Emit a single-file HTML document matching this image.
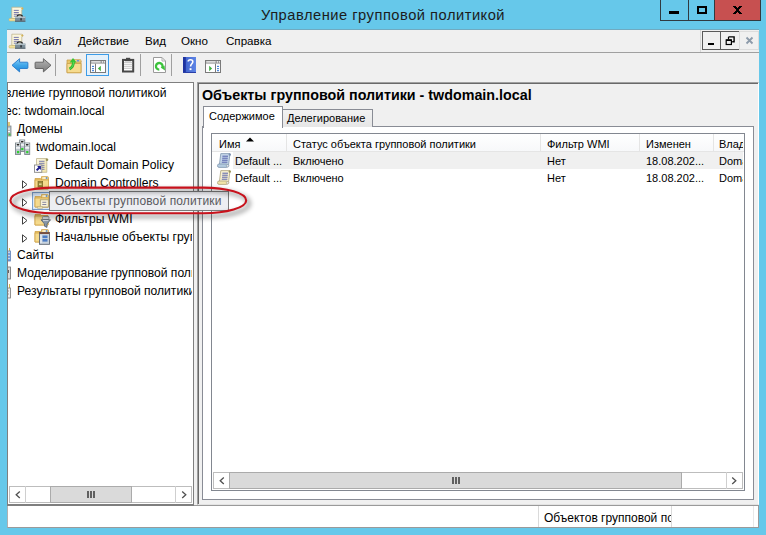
<!DOCTYPE html>
<html><head><meta charset="utf-8">
<style>
*{margin:0;padding:0;box-sizing:border-box}
html,body{width:766px;height:535px;overflow:hidden;background:#66C8EA;font-family:"Liberation Sans",sans-serif;font-size:12px;color:#000}
.a{position:absolute}
.t{position:absolute;white-space:nowrap;line-height:14px}
svg{position:absolute;overflow:visible}
.exp{position:absolute;width:0;height:0}
</style></head><body>
<!-- title bar -->
<svg style="left:9px;top:6px" width="17" height="16" viewBox="0 0 17 16">
 <path d="M2.8 1.2h9.7c0.8 0 1.6 0.6 1.6 1.3s-0.6 1.2-1.3 1.2v8.8H2.8z" fill="#FBF6DC" stroke="#B9AE86" stroke-width="0.7"/>
 <circle cx="13.2" cy="2.4" r="1" fill="#D4B254"/>
 <path d="M4.8 4.4h5M4.8 6.5h5M4.8 8.3h5M4.8 10.2h3" stroke="#6A6CA8" stroke-width="0.9"/>
 <path d="M0.8 12.4h6v2.6h-6c-0.6 0-0.8-0.6-0.8-1.3s0.2-1.3 0.8-1.3z" fill="#F3E39E" stroke="#C2B06A" stroke-width="0.6"/>
 <path d="M8.1 10.9c0-2.6 5.3-2.6 5.3 0" fill="none" stroke="#1E1E1E" stroke-width="1.3"/>
 <rect x="6" y="10.6" width="10.4" height="5" fill="#7C8E99"/>
 <rect x="6" y="10.6" width="10.4" height="1.4" fill="#B2C0C8"/>
 <rect x="6" y="14.8" width="10.4" height="0.8" fill="#46535C"/>
 <rect x="11.5" y="12.2" width="1.1" height="2.2" fill="#111"/>
</svg>
<div class="t" style="left:261px;top:5px;font-size:14.7px;line-height:20px;color:#1c1c1c;letter-spacing:0.5px">Управление групповой политикой</div>
<!-- caption buttons -->
<div class="a" style="left:660px;top:0;width:29px;height:21px;border:1px solid #303a40;border-top:0"></div>
<div class="a" style="left:669px;top:11px;width:10px;height:3px;background:#000"></div>
<div class="a" style="left:688px;top:0;width:27px;height:21px;border:1px solid #303a40;border-top:0;border-left:0"></div>
<div class="a" style="left:697px;top:6px;width:10px;height:8px;border:2px solid #000"></div>
<div class="a" style="left:714px;top:0;width:47px;height:21px;border:1px solid #303a40;border-top:0;background:#C75050"></div>
<svg style="left:733px;top:6px" width="9" height="8" viewBox="0 0 9 8" shape-rendering="crispEdges"><rect x="0" y="0" width="3" height="1" fill="#000"/><rect x="6" y="0" width="3" height="1" fill="#000"/><rect x="1" y="1" width="3" height="1" fill="#000"/><rect x="5" y="1" width="3" height="1" fill="#000"/><rect x="2" y="2" width="5" height="1" fill="#000"/><rect x="3" y="3" width="3" height="1" fill="#000"/><rect x="3" y="4" width="3" height="1" fill="#000"/><rect x="2" y="5" width="5" height="1" fill="#000"/><rect x="1" y="6" width="3" height="1" fill="#000"/><rect x="5" y="6" width="3" height="1" fill="#000"/><rect x="0" y="7" width="3" height="1" fill="#000"/><rect x="6" y="7" width="3" height="1" fill="#000"/></svg>

<!-- client -->
<div class="a" style="left:7px;top:29px;width:752px;height:499px;background:#F0F0F0;border-top:1px solid #70AAC0"></div>

<!-- menu bar -->
<svg style="left:9px;top:33px" width="17" height="16" viewBox="0 0 17 16">
 <path d="M2.8 1.2h9.7c0.8 0 1.6 0.6 1.6 1.3s-0.6 1.2-1.3 1.2v8.8H2.8z" fill="#FBF6DC" stroke="#B9AE86" stroke-width="0.7"/>
 <circle cx="13.2" cy="2.4" r="1" fill="#D4B254"/>
 <path d="M4.8 4.4h5M4.8 6.5h5M4.8 8.3h5M4.8 10.2h3" stroke="#6A6CA8" stroke-width="0.9"/>
 <path d="M0.8 12.4h6v2.6h-6c-0.6 0-0.8-0.6-0.8-1.3s0.2-1.3 0.8-1.3z" fill="#F3E39E" stroke="#C2B06A" stroke-width="0.6"/>
 <path d="M8.1 10.9c0-2.6 5.3-2.6 5.3 0" fill="none" stroke="#1E1E1E" stroke-width="1.3"/>
 <rect x="6" y="10.6" width="10.4" height="5" fill="#7C8E99"/>
 <rect x="6" y="10.6" width="10.4" height="1.4" fill="#B2C0C8"/>
 <rect x="6" y="14.8" width="10.4" height="0.8" fill="#46535C"/>
 <rect x="11.5" y="12.2" width="1.1" height="2.2" fill="#111"/>
</svg>
<div class="t" style="left:33px;top:34px;font-size:11.6px">Файл</div>
<div class="t" style="left:78px;top:34px;font-size:11.6px">Действие</div>
<div class="t" style="left:145px;top:34px;font-size:11.6px">Вид</div>
<div class="t" style="left:181px;top:34px;font-size:11.6px">Окно</div>
<div class="t" style="left:226px;top:34px;font-size:11.6px">Справка</div>
<div class="a" style="left:700px;top:30px;width:1px;height:22px;background:#D8D8D8"></div>
<div class="a" style="left:702px;top:31px;width:19px;height:19px;border:1px solid #5A5A5A"></div>
<div class="a" style="left:708px;top:43px;width:6px;height:2px;background:#000"></div>
<div class="a" style="left:720px;top:31px;width:20px;height:19px;border:1px solid #5A5A5A"></div>
<svg style="left:725px;top:36px" width="10" height="10" viewBox="0 0 10 10">
 <path d="M3.5 0.9h5.6v4.8H7.2" fill="none" stroke="#000" stroke-width="1.4"/><path d="M3.5 0.9v2.6" stroke="#000" stroke-width="1.2"/>
 <rect x="1.2" y="3.9" width="5.2" height="4.6" fill="#F0F0F0" stroke="#000" stroke-width="1.2"/>
 <rect x="1.2" y="3.5" width="5.2" height="1.5" fill="#000"/>
</svg>
<div class="a" style="left:739px;top:31px;width:20px;height:19px;border:1px solid #DCDCDC"></div>
<svg style="left:746px;top:37px" width="7" height="7" viewBox="0 0 7 7"><path d="M0.5 0.5L6.5 6.5M6.5 0.5L0.5 6.5" stroke="#8D9BAA" stroke-width="1.8"/></svg>
<div class="a" style="left:7px;top:52px;width:752px;height:1px;background:#A0A0A0"></div>

<!-- toolbar -->
<svg style="left:11px;top:58px" width="18" height="15" viewBox="0 0 18 15">
 <defs><linearGradient id="gb" x1="0" y1="0" x2="0" y2="1"><stop offset="0" stop-color="#8AD0F6"/><stop offset="0.5" stop-color="#3FA6EA"/><stop offset="1" stop-color="#1F86D6"/></linearGradient>
 <linearGradient id="gf" x1="0" y1="0" x2="0" y2="1"><stop offset="0" stop-color="#B4B4B4"/><stop offset="1" stop-color="#7C7C7C"/></linearGradient></defs>
 <path d="M1 7.3L8.6 0.7V4.2H16.2Q16.9 4.2 16.9 4.9V9.8Q16.9 10.5 16.2 10.5H8.6V13.9Z" fill="url(#gb)" stroke="#2479CC" stroke-width="0.9"/>
</svg>
<svg style="left:34px;top:58px" width="18" height="15" viewBox="0 0 18 15">
 <path d="M17 7.3L9.4 0.7V4.2H1.8Q1.1 4.2 1.1 4.9V9.8Q1.1 10.5 1.8 10.5H9.4V13.9Z" fill="url(#gf)" stroke="#5C5C5C" stroke-width="0.9"/>
</svg>
<div class="a" style="left:55px;top:54px;width:1px;height:22px;background:#A0A0A0"></div>
<svg style="left:66px;top:57px" width="16" height="16" viewBox="0 0 16 16">
 <path d="M1 3h6.5l1 1H15v11.7H1z" fill="#E9C66A" stroke="#C9A04A" stroke-width="0.8"/>
 <path d="M8 2.6h6.2c.5 0 .8.3.8.8V5H8z" fill="#F4DA96" stroke="#C9A04A" stroke-width="0.7"/>
 <rect x="10.8" y="3.2" width="2.4" height="1.2" fill="#4F7FE0"/>
 <path d="M1 6.5h14v9.2H1z" fill="#F6DB8E" stroke="#C9A04A" stroke-width="0.8"/>
 <path d="M7.4 4.8C7.6 8.2 6.4 10.3 3.6 12" fill="none" stroke="#2FB52F" stroke-width="2.8"/>
 <path d="M3.6 5.6L7 0.9 10.6 5.4z" fill="#35C435"/>
 <path d="M7.4 4.8C7.6 8.2 6.4 10.3 3.6 12" fill="none" stroke="#5BE05B" stroke-width="1"/>
</svg>
<div class="a" style="left:86px;top:54px;width:23px;height:22px;border:1px solid #3C9CE8;background:#E5F1FB"></div>
<svg style="left:90px;top:60px" width="16" height="13" viewBox="0 0 16 13">
 <rect x="0.5" y="0.5" width="15" height="12" fill="#fff" stroke="#7A7A7A"/>
 <rect x="0" y="0" width="16" height="4" fill="#7A7A7A"/>
 <rect x="1.2" y="1.2" width="9.5" height="1.4" fill="#F4F4F4"/>
 <rect x="11.6" y="1.2" width="1.4" height="1.4" fill="#fff"/><rect x="13.6" y="1.2" width="1.4" height="1.4" fill="#fff"/>
 <path d="M1 3.6h14" stroke="#D8D8D8" stroke-width="0.8"/>
 <path d="M5.5 3.7v9" stroke="#7A7A7A"/>
 <rect x="2" y="5.7" width="2" height="1.3" rx=".6" fill="#3A7BD5"/><rect x="2" y="7.9" width="2" height="1.3" rx=".6" fill="#3A7BD5"/><rect x="2" y="10" width="2" height="1.3" rx=".6" fill="#3A7BD5"/>
 <path d="M10.8 5.8v5.4L7.9 8.5z" fill="#3DAE3D"/>
</svg>
<svg style="left:121px;top:57px" width="14" height="16" viewBox="0 0 14 16">
 <rect x="2" y="2.9" width="10.2" height="11.6" fill="#fff" stroke="#474747" stroke-width="2"/>
 <rect x="5" y="0.8" width="4.2" height="1.4" fill="#474747"/>
 <rect x="4" y="2.8" width="6.2" height="1.4" fill="#474747"/>
 <path d="M3 5.4h8.2M3 7.3h8.2M3 9.3h8.2M3 11.3h8.2" stroke="#BDBDBD" stroke-width="0.9"/>
</svg>
<div class="a" style="left:140px;top:54px;width:1px;height:22px;background:#A0A0A0"></div>
<svg style="left:153px;top:57px" width="13" height="16" viewBox="0 0 13 16">
 <path d="M0.5 0.5h8.5l3.5 3.5v11.5H0.5z" fill="#fff" stroke="#9A9A9A"/>
 <path d="M9 0.5v3.5h3.5" fill="none" stroke="#B0B0B0"/>
 <path d="M6.3 12.6A3.3 3.3 0 1 1 9.3 10.6" fill="none" stroke="#3CC23C" stroke-width="2.3"/>
 <path d="M7.6 10.4L12 13.6 11.6 8.4z" fill="#3CC23C"/>
</svg>
<div class="a" style="left:171px;top:54px;width:1px;height:22px;background:#A0A0A0"></div>
<svg style="left:183px;top:57px" width="13" height="16" viewBox="0 0 13 16">
 <defs><linearGradient id="gh" x1="0" y1="0" x2="1" y2="0"><stop offset="0" stop-color="#3A5CC8"/><stop offset="1" stop-color="#5F86E6"/></linearGradient></defs>
 <rect x="0" y="0" width="13" height="16" fill="url(#gh)"/>
 <rect x="0" y="0" width="2.8" height="16" fill="#1F33A0"/>
 <rect x="0" y="15" width="13" height="1" fill="#2A3FA8"/>
 <path d="M5.2 4.6c0-2.4 4.6-2.6 4.6 0.2 0 1.9-2.2 2.1-2.2 4.6" fill="none" stroke="#fff" stroke-width="1.6"/>
 <rect x="6.6" y="11.2" width="1.9" height="1.9" fill="#fff"/>
</svg>
<svg style="left:205px;top:60px" width="16" height="13" viewBox="0 0 16 13">
 <rect x="0.5" y="0.5" width="15" height="12" fill="#fff" stroke="#7A7A7A"/>
 <rect x="0" y="0" width="16" height="4" fill="#7A7A7A"/>
 <rect x="1.2" y="1.2" width="9.5" height="1.4" fill="#F4F4F4"/>
 <rect x="11.6" y="1.2" width="1.4" height="1.4" fill="#fff"/><rect x="13.6" y="1.2" width="1.4" height="1.4" fill="#fff"/>
 <path d="M1 3.6h14" stroke="#D8D8D8" stroke-width="0.8"/>
 <path d="M10.5 3.7v9" stroke="#7A7A7A"/>
 <rect x="12" y="5.7" width="2" height="1.3" rx=".6" fill="#3A7BD5"/><rect x="12" y="7.9" width="2" height="1.3" rx=".6" fill="#3A7BD5"/><rect x="12" y="10" width="2" height="1.3" rx=".6" fill="#3A7BD5"/>
 <path d="M4.2 5.8v5.4L7.1 8.5z" fill="#3DAE3D"/>
</svg>

<!-- tree panel -->
<div class="a" style="left:7px;top:82px;width:187px;height:423px;background:#fff;border:1px solid #7F7F7F"></div>
<div class="a" style="left:8px;top:83px;width:184px;height:421px;overflow:hidden;font-size:12.1px">
 <div class="t" style="left:-3px;top:3px">вление групповой политикой</div>
 <div class="t" style="left:-3px;top:21px">ес: twdomain.local</div>
 <div class="t" style="left:9px;top:39px">Домены</div>
 <div class="t" style="left:28px;top:57px">twdomain.local</div>
 <div class="t" style="left:47px;top:75px">Default Domain Policy</div>
 <div class="t" style="left:47px;top:93px">Domain Controllers</div>
 <div class="t" style="left:47px;top:129px">Фильтры WMI</div>
 <div class="t" style="left:47px;top:147px">Начальные объекты групповой политики</div>
 <div class="t" style="left:9px;top:165px">Сайты</div>
 <div class="t" style="left:9px;top:183px">Моделирование групповой политики</div>
 <div class="t" style="left:9px;top:201px">Результаты групповой политики</div>
</div>
<!-- tree icons -->
<div class="a" style="left:8px;top:122px;width:4px;height:180px;overflow:hidden">
<svg style="left:0;top:0" width="4" height="15" viewBox="0 0 4 15"><rect x="-6" y="4" width="9" height="10" fill="#B6BEC4" stroke="#7E878D" stroke-width="0.8"/><path d="M-5 7h7M-5 9.5h7" stroke="#fff"/><rect x="0.5" y="11.5" width="2" height="2" fill="#3CC43C"/><path d="M1 0v4" stroke="#D8B850" stroke-width="1.5"/></svg>
<svg style="left:0;top:126px" width="4" height="15" viewBox="0 0 4 15"><path d="M1.5 0v3" stroke="#D8B850" stroke-width="1"/><rect x="-6" y="3" width="8.5" height="10" fill="#C5D6EA" stroke="#5B7FB8" stroke-width="0.8"/><path d="M-5 6h7M-5 9h7M-5 12h7" stroke="#2B6CD0" stroke-width="1.2"/></svg>
<svg style="left:0;top:144px" width="4" height="15" viewBox="0 0 4 15"><rect x="-6" y="1" width="8.5" height="12" fill="#D8D8D8" stroke="#6E6E6E" stroke-width="0.8"/><path d="M0 4v3" stroke="#333" stroke-width="1.4"/></svg>
<svg style="left:0;top:162px" width="4" height="15" viewBox="0 0 4 15"><path d="M1.5 0v4" stroke="#D8B850" stroke-width="1"/><rect x="-6" y="4" width="8.5" height="10" fill="#EDEDED" stroke="#777" stroke-width="0.8"/><path d="M-5 7h6M-5 10h6" stroke="#999"/></svg>
</div>
<svg style="left:15px;top:139px" width="16" height="16" viewBox="0 0 16 16">
 <rect x="4.7" y="1.0" width="5" height="11.5" fill="#BCC5CC" stroke="#7C868C" stroke-width="0.9"/>
 <rect x="5.2" y="1.5" width="4" height="2.6" fill="#ECEFF1"/>
 <rect x="5.800000000000001" y="2.1" width="2.8" height="1.3" rx=".6" fill="#2A2A2A"/>
 <rect x="5.2" y="5.1" width="4" height="1.6" fill="#F4F6F8"/>
 <rect x="6.2" y="9.0" width="2.2" height="2.2" fill="#2FD02F"/>
 <rect x="0.5" y="4.0" width="5" height="11.5" fill="#BCC5CC" stroke="#7C868C" stroke-width="0.9"/>
 <rect x="1" y="4.5" width="4" height="2.6" fill="#ECEFF1"/>
 <rect x="1.6" y="5.1" width="2.8" height="1.3" rx=".6" fill="#2A2A2A"/>
 <rect x="1" y="8.1" width="4" height="1.6" fill="#F4F6F8"/>
 <rect x="2" y="12.0" width="2.2" height="2.2" fill="#2FD02F"/>
 <rect x="9.7" y="4.0" width="5" height="11.5" fill="#BCC5CC" stroke="#7C868C" stroke-width="0.9"/>
 <rect x="10.2" y="4.5" width="4" height="2.6" fill="#ECEFF1"/>
 <rect x="10.799999999999999" y="5.1" width="2.8" height="1.3" rx=".6" fill="#2A2A2A"/>
 <rect x="10.2" y="8.1" width="4" height="1.6" fill="#F4F6F8"/>
 <rect x="11.2" y="12.0" width="2.2" height="2.2" fill="#2FD02F"/>
</svg>
<svg style="left:34px;top:158px" width="15" height="15" viewBox="0 0 15 15">
 <defs><linearGradient id="gs" x1="0" y1="0" x2="1" y2="1"><stop offset="0" stop-color="#FCF8E4"/><stop offset="1" stop-color="#F1E3A6"/></linearGradient></defs>
 <path d="M2.5 0.5h10.3v13.8H2.5z" fill="url(#gs)" stroke="#BFB58E" stroke-width="0.8"/>
 <circle cx="13" cy="1.8" r="1.3" fill="#9A9458"/>
 <path d="M5 3.3h5.5M5 5.3h5.5M5 7.3h5.5M8 9.3h2.5M8 11.3h2.5" stroke="#6B6FA8" stroke-width="0.9"/>
 <rect x="0.5" y="7" width="7.3" height="7.3" fill="#fff" stroke="#8A8A8A" stroke-width="0.9"/>
 <path d="M1.9 11.7L4.3 9.3 3.1 8.1H6.9V11.9L5.7 10.7 3.3 13.1z" fill="#1F1F8E"/>
</svg>
<!-- folders -->
<svg style="left:34px;top:176px" width="15" height="14" viewBox="0 0 15 14">
 <path d="M1 2.5h5.5l1 1H14v9.5H1z" fill="#EDC86A" stroke="#CFA248" stroke-width="0.8"/>
 <path d="M7.5 0.6h6c0.6 0 1 .4 1 1V4H7.5z" fill="#F6DE9C" stroke="#CFA248" stroke-width="0.8"/>
 <rect x="9.3" y="1.5" width="2.5" height="1" fill="#fff"/><rect x="11.8" y="1.3" width="1.6" height="1.4" fill="#3C7FD8"/>
 <path d="M1 4h13.5v9H1z" fill="#F5DA8C" stroke="#CFA248" stroke-width="0.8"/>
 <rect x="4" y="5.5" width="4.7" height="5.5" fill="#9C8A3A" stroke="#6F5F20" stroke-width="0.6"/>
 <rect x="5" y="7.5" width="2.6" height="1.4" fill="#E8E0A0"/>
</svg>
<svg style="left:34px;top:213px" width="16" height="15" viewBox="0 0 16 15">
 <path d="M1 1.5h5.5l1 1H14v9.5H1z" fill="#EDC86A" stroke="#CFA248" stroke-width="0.8"/>
 <path d="M1 3h13v9H1z" fill="#F5DA8C" stroke="#CFA248" stroke-width="0.8"/>
 <rect x="8.5" y="3.5" width="6.5" height="3" rx="1" fill="#D8DDE2" stroke="#7B8792" stroke-width="0.8"/>
 <path d="M7 6.8h9.5l-3.5 4.2v3.4l-2.5-1.2v-2.2z" fill="#8696A6" stroke="#56636F" stroke-width="0.8"/>
 <path d="M9 7.6h5.5" stroke="#E6EBF0" stroke-width="0.9"/>
</svg>
<svg style="left:34px;top:229px" width="16" height="16" viewBox="0 0 16 16">
 <path d="M1 2.5h5.5l1 1H14v9.5H1z" fill="#EDC86A" stroke="#CFA248" stroke-width="0.8"/>
 <path d="M7.5 0.6h6c0.6 0 1 .4 1 1V4H7.5z" fill="#F6DE9C" stroke="#CFA248" stroke-width="0.8"/>
 <rect x="9.3" y="1.5" width="2.5" height="1" fill="#fff"/><rect x="11.8" y="1.3" width="1.6" height="1.4" fill="#3C7FD8"/>
 <path d="M1 4h13.5v9H1z" fill="#F5DA8C" stroke="#CFA248" stroke-width="0.8"/>
 <rect x="5.5" y="3.5" width="10" height="11.8" fill="#C8D3DE" stroke="#5E6670" stroke-width="0.9"/>
 <rect x="5.5" y="3.2" width="10" height="1.8" fill="#7A4E3E"/>
 <rect x="8.5" y="6.5" width="5" height="2.6" fill="#4C7CC4"/>
 <rect x="8.5" y="10" width="5" height="2.6" fill="#4C7CC4"/>
 <path d="M7 6v8" stroke="#fff" stroke-width="0.8"/>
</svg>
<!-- expanders -->
<svg style="left:22px;top:180px" width="6" height="9" viewBox="0 0 6 9"><path d="M0.5 0.8L5 4.5 0.5 8.2z" fill="#fff" stroke="#404040" stroke-width="1"/></svg>
<svg style="left:22px;top:197.5px" width="6" height="9" viewBox="0 0 6 9"><path d="M0.5 0.8L5 4.5 0.5 8.2z" fill="#fff" stroke="#404040" stroke-width="1"/></svg>
<svg style="left:22px;top:216px" width="6" height="9" viewBox="0 0 6 9"><path d="M0.5 0.8L5 4.5 0.5 8.2z" fill="#fff" stroke="#404040" stroke-width="1"/></svg>
<svg style="left:22px;top:234px" width="6" height="9" viewBox="0 0 6 9"><path d="M0.5 0.8L5 4.5 0.5 8.2z" fill="#fff" stroke="#404040" stroke-width="1"/></svg>

<!-- right panel -->
<div class="a" style="left:197px;top:82px;width:562px;height:423px;background:#F0F0F0;border:1px solid;border-color:#A0A0A0 #FFFFFF #E3E3E3 #A0A0A0;box-shadow:inset 1px 1px 0 #696969"></div>
<div class="t" style="left:202px;top:87px;font-weight:bold;font-size:14.3px;line-height:16px;color:#000">Объекты групповой политики - twdomain.local</div>
<!-- tabs -->
<div class="a" style="left:202px;top:126px;width:552px;height:374px;background:#fff;border:1px solid #898C95"></div>
<div class="a" style="left:282px;top:109px;width:91px;height:18px;border:1px solid #898C95;border-bottom:0;background:linear-gradient(#F2F2F2,#E6E6E6)"></div>
<div class="t" style="left:287px;top:111px;font-size:11px">Делегирование</div>
<div class="a" style="left:203px;top:106px;width:80px;height:22px;border:1px solid #898C95;border-bottom:0;background:#fff"></div>
<div class="t" style="left:209px;top:109px;font-size:11px">Содержимое</div>

<!-- list view -->
<div class="a" style="left:211px;top:133px;width:534px;height:358px;background:#fff;border:1px solid #828790"></div>
<div class="a" style="left:212px;top:134px;width:532px;height:18px;background:linear-gradient(#FFFFFF,#F7F8FA);border-bottom:1px solid #E5E5E5"></div>
<div class="a" style="left:286px;top:134px;width:1px;height:17px;background:#E5E5E5"></div>
<div class="a" style="left:540px;top:134px;width:1px;height:17px;background:#E5E5E5"></div>
<div class="a" style="left:639px;top:134px;width:1px;height:17px;background:#E5E5E5"></div>
<div class="a" style="left:713px;top:134px;width:1px;height:17px;background:#E5E5E5"></div>
<svg style="left:246px;top:137px" width="8" height="5" viewBox="0 0 8 5"><path d="M0 4.5L4 0.5 8 4.5z" fill="#000"/></svg>
<div class="a" style="left:212px;top:134px;width:531px;height:338px;overflow:hidden">
 <div class="t" style="left:7px;top:3px;font-size:11px">Имя</div>
 <div class="t" style="left:81px;top:3px;font-size:11px">Статус объекта групповой политики</div>
 <div class="t" style="left:335px;top:3px;font-size:11px">Фильтр WMI</div>
 <div class="t" style="left:434px;top:3px;font-size:11px">Изменен</div>
 <div class="t" style="left:507px;top:3px;font-size:11px">Владелец</div>
 <div class="a" style="left:21px;top:18px;width:512px;height:17px;background:#F0F0F0"></div>
 <div class="t" style="left:23px;top:20px;font-size:11px">Default ...</div>
 <div class="t" style="left:81px;top:20px;font-size:11px">Включено</div>
 <div class="t" style="left:335px;top:20px;font-size:11px">Нет</div>
 <div class="t" style="left:434px;top:20px;font-size:11px">18.08.202...</div>
 <div class="t" style="left:507px;top:20px;font-size:11px">Domain Admins</div>
 <div class="t" style="left:23px;top:37px;font-size:11px">Default ...</div>
 <div class="t" style="left:81px;top:37px;font-size:11px">Включено</div>
 <div class="t" style="left:335px;top:37px;font-size:11px">Нет</div>
 <div class="t" style="left:434px;top:37px;font-size:11px">18.08.202...</div>
 <div class="t" style="left:507px;top:37px;font-size:11px">Domain Admins</div>
</div>
<svg style="left:217px;top:153px" width="15" height="15" viewBox="0 0 15 15">
 <path d="M3.8 0.6h9.2l-1.5 11.8H2.3z" fill="#C6D8EA" stroke="#7F95AE" stroke-width="0.8"/>
 <circle cx="12.8" cy="1.6" r="1.2" fill="#7A8FB0"/>
 <path d="M5.4 3.2h5.6M5.2 5.2h5.6M5 7.2h5.6M4.8 9.2h5.6" stroke="#4F58A8" stroke-width="0.95"/>
 <rect x="0.5" y="11" width="10.5" height="3.4" rx="1.6" fill="#B4CCE0" stroke="#7F95AE" stroke-width="0.8"/>
 <circle cx="10.6" cy="12.7" r="1.3" fill="#E8E8E8" stroke="#7F95AE" stroke-width="0.7"/>
</svg>
<svg style="left:217px;top:170px" width="15" height="15" viewBox="0 0 15 15">
 <path d="M3.8 0.6h9.2l-1.5 11.8H2.3z" fill="#F8F1D2" stroke="#ADA27C" stroke-width="0.8"/>
 <circle cx="12.8" cy="1.6" r="1.2" fill="#9A9458"/>
 <path d="M5.4 3.2h5.6M5.2 5.2h5.6M5 7.2h5.6M4.8 9.2h5.6" stroke="#4F58A8" stroke-width="0.95"/>
 <rect x="0.5" y="11" width="10.5" height="3.4" rx="1.6" fill="#F1E4A8" stroke="#ADA27C" stroke-width="0.8"/>
 <circle cx="10.6" cy="12.7" r="1.3" fill="#E8E8E8" stroke="#ADA27C" stroke-width="0.7"/>
</svg>
<!-- list h scrollbar -->
<div class="a" style="left:213px;top:472px;width:530px;height:17px;background:#fff;border:1px solid #BDBDBD"></div>
<div class="a" style="left:229px;top:472px;width:453px;height:17px;background:#DADADA;border:1px solid #ABABAB"></div>
<div class="a" style="left:726px;top:472px;width:16px;height:17px;border-left:1px solid #CFCFCF"></div>
<svg style="left:219px;top:477px" width="6" height="8" viewBox="0 0 6 8"><path d="M4.8 0.6L1.2 3.8 4.8 7" fill="none" stroke="#505050" stroke-width="1.3"/></svg>
<svg style="left:731px;top:477px" width="6" height="8" viewBox="0 0 6 8"><path d="M1.2 0.6L4.8 3.8 1.2 7" fill="none" stroke="#505050" stroke-width="1.3"/></svg>
<div class="a" style="left:452px;top:477px;width:2px;height:7px;background:#606060"></div>
<div class="a" style="left:455px;top:477px;width:2px;height:7px;background:#606060"></div>
<div class="a" style="left:458px;top:477px;width:2px;height:7px;background:#606060"></div>

<!-- tree h scrollbar -->
<div class="a" style="left:9px;top:486px;width:183px;height:17px;background:#fff;border:1px solid #BDBDBD"></div>
<div class="a" style="left:25px;top:486px;width:1px;height:17px;background:#CFCFCF"></div>
<div class="a" style="left:50px;top:486px;width:82px;height:17px;background:#DADADA;border:1px solid #ABABAB"></div>
<div class="a" style="left:175px;top:486px;width:1px;height:17px;background:#CFCFCF"></div>
<svg style="left:15px;top:491px" width="6" height="8" viewBox="0 0 6 8"><path d="M4.8 0.6L1.2 3.8 4.8 7" fill="none" stroke="#505050" stroke-width="1.3"/></svg>
<svg style="left:181px;top:491px" width="6" height="8" viewBox="0 0 6 8"><path d="M1.2 0.6L4.8 3.8 1.2 7" fill="none" stroke="#505050" stroke-width="1.3"/></svg>
<div class="a" style="left:87px;top:491px;width:2px;height:7px;background:#606060"></div>
<div class="a" style="left:90px;top:491px;width:2px;height:7px;background:#606060"></div>
<div class="a" style="left:93px;top:491px;width:2px;height:7px;background:#606060"></div>

<!-- status bar -->
<div class="a" style="left:7px;top:505px;width:752px;height:23px;background:#FFFFFF;border:solid #8C8C8C;border-width:1px 1px 1px 1px;border-color:#9A9A9A #9A9A9A #9A9A9A #B0B0B0"></div><div class="a" style="left:7px;top:505px;width:187px;height:1px;background:#7F7F7F"></div>
<div class="a" style="left:538px;top:506px;width:1px;height:21px;background:#DADADA"></div>
<div class="a" style="left:671px;top:506px;width:1px;height:21px;background:#DADADA"></div>
<div class="a" style="left:753px;top:506px;width:1px;height:21px;background:#E8E8E8"></div>
<div class="a" style="left:539px;top:506px;width:132px;height:21px;overflow:hidden">
 <div class="t" style="left:5px;top:5px">Объектов групповой политики</div>
</div>

<!-- highlighted item -->
<div class="a" style="left:32px;top:192px;width:18px;height:18px;border:1px solid #7DA2CE;background:#DCEBFC"></div>
<svg style="left:34px;top:194px" width="15" height="15" viewBox="0 0 15 15">
 <path d="M1 2.5h5.5l1 1H14v9.5H1z" fill="#EDC86A" stroke="#CFA248" stroke-width="0.8"/>
 <path d="M7.5 0.6h6c0.6 0 1 .4 1 1V4H7.5z" fill="#F6DE9C" stroke="#CFA248" stroke-width="0.8"/>
 <rect x="9.3" y="1.5" width="2.5" height="1" fill="#fff"/><rect x="11.8" y="1.3" width="1.6" height="1.4" fill="#3C7FD8"/>
 <path d="M1 4h13.5v9H1z" fill="#F5DA8C" stroke="#CFA248" stroke-width="0.8"/>
 <rect x="6.3" y="5.8" width="8" height="7.2" fill="#F8F2D8" stroke="#A69A70" stroke-width="0.8"/>
 <path d="M8.3 8.3h4M8.3 10.5h4" stroke="#7A7A9A" stroke-width="0.9"/>
 <path d="M3.5 12.5h5v1.8h-5z" fill="#F2E6B2" stroke="#B8A878" stroke-width="0.6"/>
</svg>
<div class="a" style="left:49px;top:191px;width:180px;height:20px;border:1px solid #7D7D7D;background:#EDEEF2"></div>
<div class="t" style="left:55px;top:194px;color:#5A5A5E;letter-spacing:0.13px">Объекты групповой политики</div>

<!-- red ellipse -->
<svg style="left:0;top:0" width="766" height="535" viewBox="0 0 766 535">
 <defs><filter id="sh" x="-10%" y="-100%" width="120%" height="300%"><feGaussianBlur stdDeviation="2.5"/></filter></defs>
 <path d="M53.4 187.6H203.2A43 12.8 0 0 1 246.2 200.4A43 12.8 0 0 1 203.2 213.2H53.4A43 12.8 0 0 1 10.4 200.4A43 12.8 0 0 1 53.4 187.6Z" fill="none" stroke="#000" stroke-width="3" opacity="0.45" filter="url(#sh)" transform="translate(3,3)"/>
 <path d="M53.4 187.6H203.2A43 12.8 0 0 1 246.2 200.4A43 12.8 0 0 1 203.2 213.2H53.4A43 12.8 0 0 1 10.4 200.4A43 12.8 0 0 1 53.4 187.6Z" fill="none" stroke="#C8121C" stroke-width="2.1"/>
</svg>
</body></html>
